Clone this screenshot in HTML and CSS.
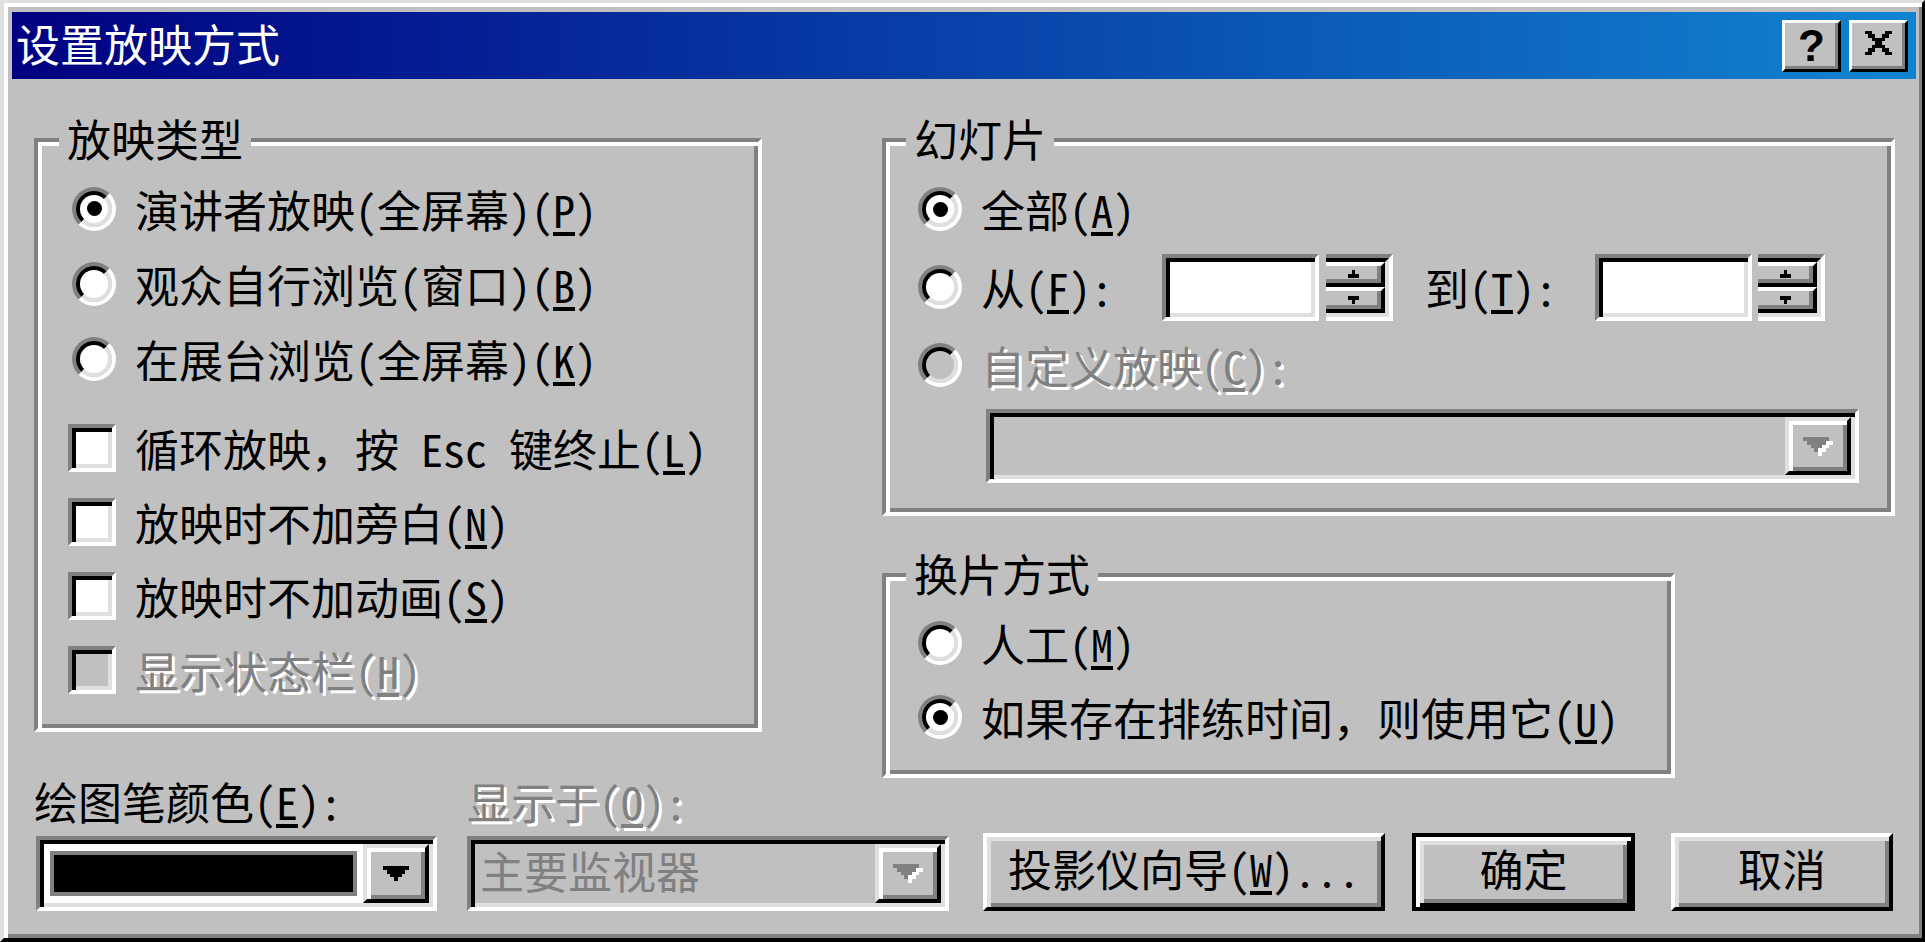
FILE: index.html
```html
<!DOCTYPE html>
<html lang="zh-CN">
<head>
<meta charset="utf-8">
<title>设置放映方式</title>
<link rel="stylesheet" href="styles.css">
</head>
<body>
<div class="window">
  <div class="titlebar">
    <span class="title-text">设置放映方式</span>
    <div class="cap-btns">
      <div class="cap cap-help">?</div>
      <div class="cap cap-close">
        <svg class="xicon" width="31" height="24" viewBox="0 0 8 7" shape-rendering="crispEdges"><path d="M0 0h2v1h-2z M6 0h2v1h-2z M1 1h2v1h-2z M5 1h2v1h-2z M2 2h4v1h-4z M3 3h2v1h-2z M2 4h4v1h-4z M1 5h2v1h-2z M5 5h2v1h-2z M0 6h2v1h-2z M6 6h2v1h-2z" fill="#000"/></svg>
      </div>
    </div>
  </div>

  <div class="main">
    <div class="top">
      <div class="group g1">
        <div class="legend">放映类型</div>
        <div class="rows rows-g1">
          <div class="row h75">
            <span class="slot"><span class="radio"><span class="ring"><span class="dot"></span></span></span></span>
            <span class="lbl">演讲者放映(全屏幕)(<u>P</u>)</span>
          </div>
          <div class="row h75">
            <span class="slot"><span class="radio"><span class="ring"></span></span></span>
            <span class="lbl">观众自行浏览(窗口)(<u>B</u>)</span>
          </div>
          <div class="row h75">
            <span class="slot"><span class="radio"><span class="ring"></span></span></span>
            <span class="lbl">在展台浏览(全屏幕)(<u>K</u>)</span>
          </div>
          <div class="row h74 gap15">
            <span class="slot"><span class="check"></span></span>
            <span class="lbl">循环放映，按 Esc 键终止(<u>L</u>)</span>
          </div>
          <div class="row h74">
            <span class="slot"><span class="check"></span></span>
            <span class="lbl">放映时不加旁白(<u>N</u>)</span>
          </div>
          <div class="row h74">
            <span class="slot"><span class="check"></span></span>
            <span class="lbl">放映时不加动画(<u>S</u>)</span>
          </div>
          <div class="row h74">
            <span class="slot"><span class="check dis"></span></span>
            <span class="lbl dis-t">显示状态栏(<u>H</u>)</span>
          </div>
        </div>
      </div>

      <div class="rcol">
        <div class="group g2">
          <div class="legend">幻灯片</div>
          <div class="rows rows-g2">
            <div class="row h78">
              <span class="slot"><span class="radio"><span class="ring"><span class="dot"></span></span></span></span>
              <span class="lbl">全部(<u>A</u>)</span>
            </div>
            <div class="row h78">
              <span class="slot"><span class="radio"><span class="ring"></span></span></span>
              <span class="lbl w-from">从(<u>F</u>):</span>
              <span class="edit"></span>
              <span class="spin spin1">
                <span class="spin-in">
                  <span class="sbtn"><svg width="11" height="8" viewBox="0 0 3 2" shape-rendering="crispEdges"><path d="M1 0H2V1H3V2H0V1H1Z" fill="#000"/></svg></span>
                  <span class="sbtn"><svg width="11" height="8" viewBox="0 0 3 2" shape-rendering="crispEdges"><path d="M0 0H3V1H2V2H1V1H0Z" fill="#000"/></svg></span>
                </span>
              </span>
              <span class="lbl w-to">到(<u>T</u>):</span>
              <span class="edit"></span>
              <span class="spin spin2">
                <span class="spin-in">
                  <span class="sbtn"><svg width="11" height="8" viewBox="0 0 3 2" shape-rendering="crispEdges"><path d="M1 0H2V1H3V2H0V1H1Z" fill="#000"/></svg></span>
                  <span class="sbtn"><svg width="11" height="8" viewBox="0 0 3 2" shape-rendering="crispEdges"><path d="M0 0H3V1H2V2H1V1H0Z" fill="#000"/></svg></span>
                </span>
              </span>
            </div>
            <div class="row h78">
              <span class="slot"><span class="radio"><span class="ring dis"></span></span></span>
              <span class="lbl dis-t">自定义放映(<u>C</u>):</span>
            </div>
            <div class="combo dis combo-show">
              <span class="combo-val"></span>
              <span class="dd">
                <svg width="30" height="19" viewBox="0 0 8 5" shape-rendering="crispEdges"><path d="M1 1H8V2H7V3H6V4H5V5H4V4H3V3H2V2H1Z" fill="#fff"/><path d="M0 0H7V1H6V2H5V3H4V4H3V3H2V2H1V1H0Z" fill="#808080"/></svg>
              </span>
            </div>
          </div>
        </div>

        <div class="group g3">
          <div class="legend">换片方式</div>
          <div class="rows rows-g3">
            <div class="row h74">
              <span class="slot"><span class="radio"><span class="ring"></span></span></span>
              <span class="lbl">人工(<u>M</u>)</span>
            </div>
            <div class="row h74">
              <span class="slot"><span class="radio"><span class="ring"><span class="dot"></span></span></span></span>
              <span class="lbl">如果存在排练时间，则使用它(<u>U</u>)</span>
            </div>
          </div>
        </div>
      </div>
    </div>

    <div class="bottom">
      <div class="field f1">
        <span class="flabel">绘图笔颜色(<u>E</u>):</span>
        <div class="combo combo-pen">
          <span class="swatch"></span>
          <span class="dd">
            <svg width="26" height="15" viewBox="0 0 7 4" shape-rendering="crispEdges"><path d="M0 0H7V1H6V2H5V3H4V4H3V3H2V2H1V1H0Z" fill="#000"/></svg>
          </span>
        </div>
      </div>
      <div class="field f2">
        <span class="flabel dis-t">显示于(<u>O</u>):</span>
        <div class="combo dis combo-mon">
          <span class="combo-val mon-text">主要监视器</span>
          <span class="dd">
            <svg width="30" height="19" viewBox="0 0 8 5" shape-rendering="crispEdges"><path d="M1 1H8V2H7V3H6V4H5V5H4V4H3V3H2V2H1Z" fill="#fff"/><path d="M0 0H7V1H6V2H5V3H4V4H3V3H2V2H1V1H0Z" fill="#808080"/></svg>
          </span>
        </div>
      </div>
      <div class="btns">
        <div class="btn b1">投影仪向导(<u>W</u>)...</div>
        <div class="btn b2 default">确定</div>
        <div class="btn b3">取消</div>
      </div>
    </div>
  </div>
</div>
</body>
</html>
```

FILE: styles.css
```css
* { box-sizing: border-box; }
html, body { margin: 0; padding: 0; }
body {
  width: 1925px;
  height: 942px;
  overflow: hidden;
  background: #c0c0c0;
  font-family: "Noto Sans Mono CJK SC", "Noto Sans CJK SC", sans-serif;
  font-size: 44px;
  line-height: 44px;
  color: #000;
}

.window {
  width: 1925px;
  height: 942px;
  background: #c0c0c0;
  border-style: solid;
  border-width: 3px 3px 4px 4px;
  border-color: #dfdfdf #000 #000 #dfdfdf;
  box-shadow: inset 4px 4px 0 #fff, inset -3px -4px 0 #808080;
  padding: 9px 6px 8px 8px;
  display: flex;
  flex-direction: column;
}

/* title bar */
.titlebar {
  height: 67px;
  flex: none;
  display: flex;
  align-items: center;
  background: linear-gradient(to right, #000080, #1084d0);
  color: #fff;
  padding: 0 8px 0 4px;
}
.title-text { padding-bottom: 6px; white-space: pre; }
.cap-btns { margin-left: auto; display: flex; gap: 8px; }
.cap {
  width: 59px;
  height: 52px;
  background: #c0c0c0;
  border-style: solid;
  border-width: 3px;
  border-color: #fff #000 #000 #fff;
  box-shadow: inset -3px -3px 0 #808080;
  display: flex;
  align-items: center;
  justify-content: center;
  color: #000;
  font-family: "Liberation Sans", Arial, sans-serif;
  font-weight: bold;
  font-size: 44px;
  line-height: 44px;
}
.xicon { margin-bottom: 5px; }

/* main area */
.main {
  flex: 1;
  padding: 59px 21px 0 22px;
}
.top {
  display: flex;
  align-items: flex-start;
  height: 640px;
}
.rcol {
  margin-left: 120px;
  display: flex;
  flex-direction: column;
}

.group {
  border-style: solid;
  border-width: 4px;
  border-color: #808080 #fff #fff #808080;
  box-shadow: inset 4px 4px 0 #fff, inset -4px -4px 0 #808080;
}
.g1 { width: 728px; height: 594px; }
.g2 { width: 1013px; height: 378px; }
.g3 { width: 793px; height: 205px; margin-top: 57px; }

.legend {
  width: fit-content;
  margin: -26px 0 -18px 20px;
  padding: 0 8px;
  background: #c0c0c0;
  white-space: pre;
}
.g1 .legend { margin-left: 21px; }

.rows-g1 { padding: 29px 0 0 30px; }
.rows-g2 { padding: 28px 0 0 28px; }
.rows-g3 { padding: 29px 0 0 28px; }

.row { display: flex; align-items: center; }
.h74 { height: 74px; }
.h75 { height: 75px; }
.h78 { height: 78px; }
.gap15 { margin-top: 15px; }

.slot {
  flex: none;
  width: 48px;
  margin-right: 19px;
  display: flex;
  justify-content: flex-end;
}
.radio {
  width: 44px;
  height: 44px;
  border-radius: 50%;
  border: 4px solid;
  border-color: #808080 #fff #fff #808080;
}
.ring {
  width: 100%;
  height: 100%;
  border-radius: 50%;
  border: 4px solid;
  border-color: #000 #dfdfdf #dfdfdf #000;
  background: #fff;
  display: flex;
  align-items: center;
  justify-content: center;
}
.ring.dis { background: #c0c0c0; }
.dot { width: 15px; height: 15px; border-radius: 50%; background: #000; }

.check {
  width: 48px;
  height: 48px;
  border: 4px solid;
  border-color: #808080 #fff #fff #808080;
  box-shadow: inset 4px 4px 0 #000, inset -4px -4px 0 #dfdfdf;
  background: #fff;
}
.check.dis { background: #c0c0c0; }

.lbl { flex: none; white-space: pre; }
.w-from { width: 181px; }
.w-to { width: 170px; margin-left: 32px; }
.dis-t { color: #808080; text-shadow: 3px 3px 0 #fff; }
u { text-decoration-thickness: 4px; text-underline-offset: 4px; }

/* edit & spinner */
.edit {
  flex: none;
  width: 157px;
  height: 67px;
  border: 4px solid;
  border-color: #808080 #fff #fff #808080;
  box-shadow: inset 4px 4px 0 #000, inset -4px -4px 0 #dfdfdf;
  background: #fff;
}
.spin {
  flex: none;
  width: 67px;
  height: 67px;
  display: flex;
  border-style: solid;
  border-width: 4px 4px 4px 0;
  border-color: #808080 #fff #fff;
}
.spin1 { margin-left: 7px; }
.spin2 { margin-left: 6px; }
.spin-in {
  flex: 1;
  display: flex;
  flex-direction: column;
  border-style: solid;
  border-width: 4px 4px 4px 0;
  border-color: #000 #dfdfdf #dfdfdf;
}
.sbtn {
  flex: 1;
  background: #c0c0c0;
  border-style: solid;
  border-width: 4px 4px 4px 0;
  border-color: #fff #000 #000;
  box-shadow: inset -4px -4px 0 #808080;
  display: flex;
  align-items: center;
  justify-content: center;
}

/* combos */
.combo {
  display: flex;
  border: 4px solid;
  border-color: #808080 #fff #fff #808080;
  box-shadow: inset 4px 4px 0 #000, inset -4px -4px 0 #dfdfdf;
  padding: 4px;
  background: #fff;
}
.combo.dis { background: #c0c0c0; }
.combo-show { width: 873px; height: 74px; margin: 5px 0 0 72px; }
.combo-val { flex: 1; display: flex; align-items: center; white-space: pre; }
.mon-text { color: #808080; padding: 0 0 8px 5px; }
.swatch {
  flex: 1;
  margin: 7px 6px;
  border: 4px solid #808080;
  background: #000;
}
.dd {
  flex: none;
  width: 66px;
  background: #c0c0c0;
  border: 4px solid;
  border-color: #dfdfdf #000 #000 #dfdfdf;
  box-shadow: inset 4px 4px 0 #fff, inset -4px -4px 0 #808080;
  display: flex;
  align-items: center;
  justify-content: center;
}

/* bottom row */
.bottom {
  display: flex;
  align-items: flex-end;
  margin-top: 1px;
}
.field { display: flex; flex-direction: column; }
.flabel { height: 44px; margin-bottom: 13px; white-space: pre; }
.combo-pen { width: 401px; height: 75px; margin-left: 2px; }
.f2 { margin-left: 30px; }
.combo-mon { width: 482px; height: 75px; }

.btns { display: flex; margin-left: 34px; }
.btn {
  height: 78px;
  display: flex;
  align-items: center;
  justify-content: center;
  padding-bottom: 8px;
  white-space: pre;
  background: #c0c0c0;
  border: 4px solid;
  border-color: #fff #000 #000 #fff;
  box-shadow: inset 4px 4px 0 #dfdfdf, inset -4px -4px 0 #808080;
}
.b1 { width: 402px; }
.b2 { width: 223px; margin-left: 27px; }
.b3 { width: 222px; margin-left: 36px; }
.btn.default {
  border-color: #000;
  box-shadow: inset 4px 4px 0 #fff, inset -4px -4px 0 #000, inset 8px 8px 0 #dfdfdf, inset -8px -8px 0 #808080;
}
```
